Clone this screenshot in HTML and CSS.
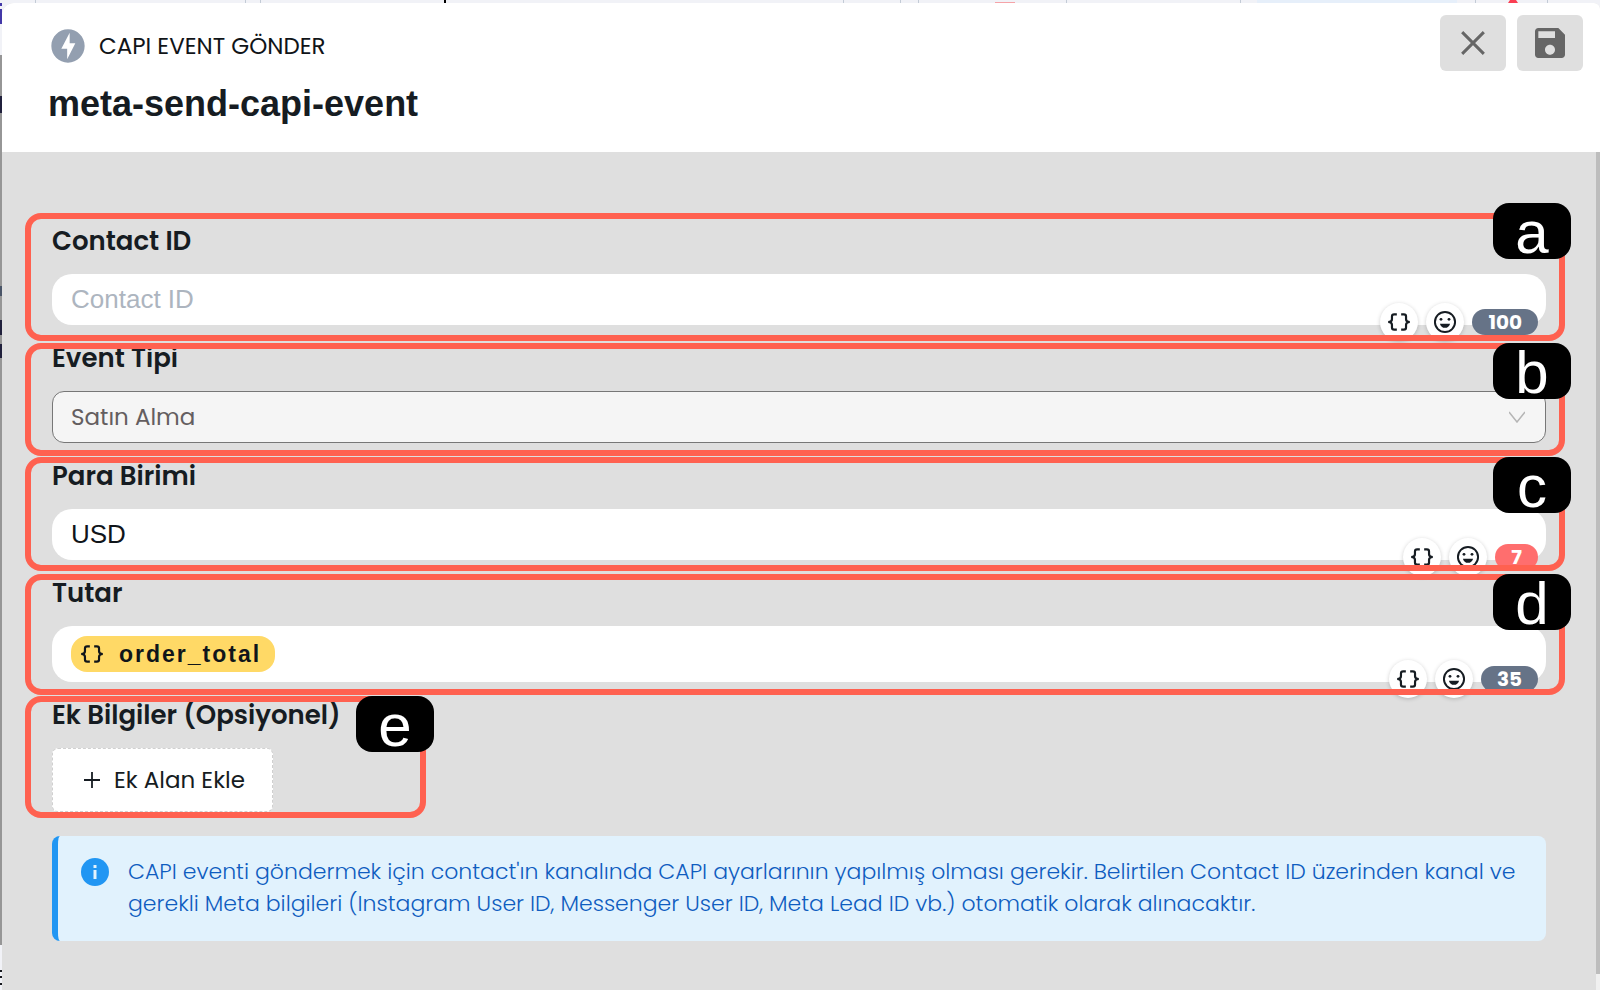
FILE: index.html
```html
<!DOCTYPE html>
<html lang="tr">
<head>
    <meta charset="UTF-8">
    <meta name="viewport" content="width=device-width, initial-scale=1.0">
    <title>CAPI Event Gönder</title>
    <link rel="stylesheet" href="styles.css">
</head>
<body>
    <!-- Shared icons -->
    <svg class="sprite" aria-hidden="true">
        <symbol id="braces" viewBox="0 0 24 24">
            <path d="M10 5H7.500Q5.500 5 5.500 7v2.500Q5.500 12 2 12q3.500 0 3.500 2.500V17q0 2 2 2H10M14 5h2.500q2 0 2 2v2.500q0 2.500 3.500 2.500-3.500 0-3.500 2.500V17q0 2-2 2H14" fill="none" stroke="currentColor" stroke-width="2"/>
        </symbol>
        <symbol id="smile" viewBox="0 0 24 24">
            <circle cx="12" cy="12" r="9.300" fill="none" stroke="currentColor" stroke-width="1.800"/>
            <circle cx="8.300" cy="9.500" r="1.300" fill="currentColor"/>
            <circle cx="15.700" cy="9.500" r="1.300" fill="currentColor"/>
            <path d="M7.300 13.500h9.400c-.6 2.400-2.400 3.900-4.700 3.900s-4.100-1.500-4.700-3.900z" fill="currentColor"/>
        </symbol>
    </svg>

    <!-- Page behind the modal -->
    <svg class="backdrop" aria-hidden="true">
        <rect y="55" width="2" height="890" fill="#969696"/>
        <path d="M0 3h2v3H0zM0 9h2v15H0z" fill="#4338a8"/>
        <path d="M0 96h2v17H0zM0 320h2v15H0zM0 344h2v14H0z" fill="#20203c"/>
        <path d="M0 286h2v10H0z" fill="#4a5568"/>
        <path d="M0 970h2v2H0zM0 976h2v2H0zM0 983h2v2H0z" fill="#16181d"/>
        <path d="M35 0h1v3h-1zM245 0h1v3h-1zM260 0h1v3h-1zM843 0h1v3h-1zM900 0h1v3h-1zM918 0h1v3h-1zM1066 0h1v3h-1zM1240 0h1v3h-1zM1475 0h1v3h-1zM1547 0h1v3h-1z" fill="#c3cbd6"/>
        <path d="M444 0h2v3h-2z" fill="#000"/>
        <path d="M1257 0h200v3h-200z" fill="#e6effa"/>
        <path d="M995 2h20v1h-20z" fill="#f5a3a8"/>
        <path d="M1510 0h6l2 3h-10z" fill="#fa3e52"/>
    </svg>

    <main class="modal">
        <header class="modal-header">
            <div>
                <div class="node-type">
                    <svg viewBox="0 0 24 24" aria-hidden="true"><path d="M12 2C6.500 2 2 6.500 2 12s4.500 10 10 10 10-4.500 10-10S17.500 2 12 2zm-.5 18v-6.300H8L13 4v6.300h3.400L11.500 20z"/></svg>
                    <span>CAPI EVENT GÖNDER</span>
                </div>
                <h1>meta-send-capi-event</h1>
            </div>
            <div class="actions">
                <button type="button" aria-label="Kapat">
                    <svg viewBox="0 0 24 24"><path d="M5.500 5.500l13 13M18.500 5.500l-13 13" stroke="currentColor" stroke-width="1.800"/></svg>
                </button>
                <button type="button" aria-label="Kaydet">
                    <svg viewBox="0 0 24 24"><path fill="currentColor" d="M17 3H5c-1.110 0-2 .9-2 2v14c0 1.100.89 2 2 2h14c1.100 0 2-.9 2-2V7l-4-4zm-5 16c-1.660 0-3-1.340-3-3s1.340-3 3-3 3 1.340 3 3-1.340 3-3 3zm3-10H5V5h10v4z"/></svg>
                </button>
            </div>
        </header>

        <form class="modal-body">
            <!-- Contact ID -->
            <div class="field">
                <label for="contact">Contact ID</label>
                <div class="control">
                    <input id="contact" type="text" placeholder="Contact ID">
                    <div class="tools">
                        <button type="button" aria-label="Değişken"><svg><use href="#braces"/></svg></button>
                        <button type="button" aria-label="Emoji"><svg><use href="#smile"/></svg></button>
                        <span class="count">100</span>
                    </div>
                </div>
                <div class="mark mark-a"><span>a</span></div>
            </div>

            <!-- Event Tipi -->
            <div class="field">
                <label for="event-type">Event Tipi</label>
                <div class="control">
                    <select id="event-type">
                        <option>Satın Alma</option>
                    </select>
                    <svg class="chevron" viewBox="0 0 16 12" aria-hidden="true"><path d="M0 1l8 10 8-10" fill="none" stroke="#b5b5b5" stroke-width="1.500"/></svg>
                </div>
                <div class="mark mark-b"><span>b</span></div>
            </div>

            <!-- Para Birimi -->
            <div class="field">
                <label for="currency">Para Birimi</label>
                <div class="control">
                    <input id="currency" type="text" value="USD">
                    <div class="tools">
                        <button type="button" aria-label="Değişken"><svg><use href="#braces"/></svg></button>
                        <button type="button" aria-label="Emoji"><svg><use href="#smile"/></svg></button>
                        <span class="count count-low">7</span>
                    </div>
                </div>
                <div class="mark mark-c"><span>c</span></div>
            </div>

            <!-- Tutar -->
            <div class="field">
                <label id="amount-label">Tutar</label>
                <div class="control">
                    <div class="token-input" role="textbox" contenteditable="true" aria-labelledby="amount-label"><span class="token" contenteditable="false"><svg><use href="#braces"/></svg>order_total</span></div>
                    <div class="tools">
                        <button type="button" aria-label="Değişken"><svg><use href="#braces"/></svg></button>
                        <button type="button" aria-label="Emoji"><svg><use href="#smile"/></svg></button>
                        <span class="count">35</span>
                    </div>
                </div>
                <div class="mark mark-d"><span>d</span></div>
            </div>

            <!-- Ek Bilgiler -->
            <div class="field">
                <label for="add-field">Ek Bilgiler (Opsiyonel)</label>
                <button id="add-field" class="add-button" type="button">
                    <svg viewBox="0 0 16 16" aria-hidden="true"><path d="M8 0v16M0 8h16" stroke="currentColor" stroke-width="1.800"/></svg>
                    Ek Alan Ekle
                </button>
                <div class="mark mark-e"><span>e</span></div>
            </div>

            <div class="info">
                <svg viewBox="0 0 28 28" aria-hidden="true"><circle cx="14" cy="14" r="14" fill="#2196f3"/><path d="M12.500 7h3v3h-3zM12.500 12h3v9h-3z" fill="#e1f2fd"/></svg>
                <p>CAPI eventi göndermek için contact'ın kanalında CAPI ayarlarının yapılmış olması gerekir. Belirtilen Contact ID üzerinden kanal ve gerekli Meta bilgileri (Instagram User ID, Messenger User ID, Meta Lead ID vb.) otomatik olarak alınacaktır.</p>
            </div>
            <div class="scrollbar"></div>
        </form>
    </main>
</body>
</html>
```
FILE: styles.css
```css
* {
    margin: 0;
    padding: 0;
    box-sizing: border-box;
}

body {
    font-family: Poppins, Inter, sans-serif;
    background-color: #f1f2f7;
    color: #161c22;
    overflow: hidden;
}

button {
    font: inherit;
    color: inherit;
    border: none;
    cursor: pointer;
}

.sprite {
    display: none;
}

.backdrop {
    position: absolute;
    top: 0;
    left: 0;
    width: 100%;
    height: 100%;
}

.modal {
    position: relative;
    display: flex;
    flex-direction: column;
    margin: 3px 0 0 2px;
    min-height: calc(100vh - 3px);
    background-color: #dfdfdf;
    border-radius: 12px 6px 0 0;
    overflow: hidden;
}

/* Header */
.modal-header {
    display: flex;
    justify-content: space-between;
    align-items: flex-start;
    padding: 23px 17px 26px 46px;
    background-color: #fff;
}

.node-type {
    display: flex;
    align-items: center;
    gap: 11px;
    height: 40px;
    margin-bottom: 16px;
    font-size: 23px;
    color: #101418;
}

.node-type svg {
    width: 40px;
    height: 40px;
    fill: #939fb0;
}

h1 {
    font-family: "Liberation Sans", Arial, sans-serif;
    font-size: 36px;
    line-height: 44px;
    font-weight: bold;
}

.actions {
    display: flex;
    gap: 11px;
    margin-top: -11px;
}

.actions button {
    display: flex;
    align-items: center;
    justify-content: center;
    width: 66px;
    height: 56px;
    border-radius: 6px;
    background-color: #dfdfdf;
    color: #666;
}

.actions svg {
    width: 40px;
    height: 40px;
}

/* Form */
.modal-body {
    position: relative;
    flex: 1;
    padding: 72px 54px 48px 50px;
}

.field {
    position: relative;
    margin-bottom: 16px;
}

.field label {
    display: block;
    margin-bottom: 15px;
    font-size: 26px;
    line-height: 35px;
    font-weight: 600;
}

.control {
    position: relative;
}

.control input,
.control select,
.token-input {
    display: block;
    width: 100%;
    height: 51px;
    padding: 0 19px;
    border: none;
    border-radius: 20px;
    outline: none;
    background-color: #fff;
    font-family: "Liberation Sans", Arial, sans-serif;
    font-size: 26px;
    color: #10151a;
}

.control input::placeholder {
    color: #adb5bf;
}

.control select {
    appearance: none;
    height: 52px;
    padding: 0 18px;
    border: 1px solid #777;
    border-radius: 12px;
    background-color: #f5f5f5;
    font-family: Poppins, Inter, sans-serif;
    font-size: 23px;
    color: #645e60;
}

.chevron {
    position: absolute;
    top: 20px;
    right: 21px;
    width: 16px;
    height: 12px;
}

.control .token-input {
    display: flex;
    align-items: center;
    height: 56px;
}

.token {
    display: flex;
    align-items: center;
    height: 36px;
    padding: 0 14px 0 8px;
    border-radius: 16px;
    background-color: #ffd966;
    font-size: 23px;
    font-weight: bold;
    letter-spacing: 2px;
}

.token svg {
    width: 26px;
    height: 26px;
    margin-right: 14px;
}

.tools {
    position: absolute;
    right: 8px;
    bottom: -16px;
    display: flex;
    align-items: center;
    gap: 8px;
}

.tools button {
    display: flex;
    align-items: center;
    justify-content: center;
    width: 38px;
    height: 38px;
    border-radius: 50%;
    background-color: #fff;
    box-shadow: 0 1px 4px rgba(0, 0, 0, 0.2);
}

.tools svg {
    width: 26px;
    height: 26px;
}

.count {
    height: 26px;
    padding: 0 16px;
    border-radius: 13px;
    background-color: #667387;
    color: #fff;
    font-size: 20px;
    line-height: 26px;
    font-weight: bold;
}

.count-low {
    background-color: #ff6e6e;
}

.add-button {
    display: flex;
    align-items: center;
    gap: 14px;
    height: 64px;
    padding: 0 27px 0 31px;
    border: 1px dashed #d0d0d0;
    border-radius: 6px;
    background-color: #fff;
    font-size: 23px;
}

.add-button svg {
    width: 16px;
    height: 16px;
}

/* Step markers drawn over the fields */
.mark {
    position: absolute;
    left: -27px;
    right: -19px;
    border: 6px solid #ff6150;
    border-radius: 16px;
    pointer-events: none;
}

.mark span {
    position: absolute;
    top: -6px;
    right: -12px;
    width: 78px;
    height: 56px;
    border-radius: 16px;
    background-color: #000;
    color: #fff;
    font-family: "Liberation Sans", Arial, sans-serif;
    font-size: 60px;
    line-height: 60px;
    text-align: center;
}

.mark-a {
    top: -11px;
    bottom: -16px;
}

.mark-a span {
    top: -16px;
}

.mark-b {
    top: 2px;
    bottom: -13px;
}

.mark-c {
    top: -2px;
    bottom: -11px;
}

.mark-d {
    top: -2px;
    bottom: -13px;
}

.mark-e {
    top: -2px;
    right: auto;
    bottom: -6px;
    width: 401px;
}

.mark-e span {
    right: -14px;
}

/* Info box */
.info {
    display: flex;
    align-items: flex-start;
    gap: 19px;
    margin-top: 24px;
    padding: 20px 24px 21px 23px;
    border-left: 6px solid #2196f3;
    border-radius: 8px;
    background-color: #e1f2fd;
    color: #0f5dc0;
    font-size: 22px;
    font-weight: 300;
    line-height: 32px;
}

.info svg {
    flex: none;
    width: 28px;
    height: 28px;
    margin-top: 2px;
}

.scrollbar {
    position: absolute;
    top: 0;
    right: 0;
    bottom: 0;
    width: 4px;
    background: linear-gradient(#bdbdbd, #bdbdbd) top / 100% calc(100% - 16px) no-repeat #f0f0f0;
}
```
